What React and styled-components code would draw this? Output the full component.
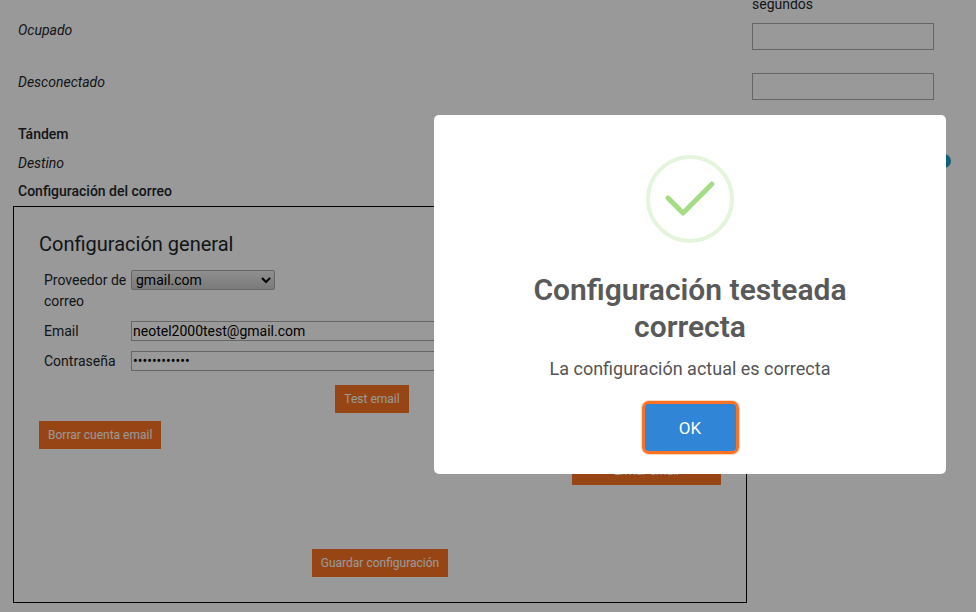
import React from 'react';
import styled, { createGlobalStyle } from 'styled-components';

const GlobalStyle = createGlobalStyle`
  html, body {
    margin: 0;
    height: 100%;
    overflow: hidden;
    background: #fff;
    font-family: Roboto, 'Liberation Sans', sans-serif;
    color: #212529;
  }
`;

const Page = styled.div`
  width: 976px;
  height: 612px;
  overflow: hidden;
`;

/* the page behind the dialog is scrolled a few pixels */
const Content = styled.div`
  margin-top: -4px;
  display: flex;
  flex-direction: column;
`;

const SettingRow = styled.div`
  display: flex;
  justify-content: space-between;
  align-items: flex-start;
  height: ${(p) => p.$height}px;
  padding-left: 18px;
`;

const StateLabel = styled.i`
  display: block;
  font-size: 14px;
  line-height: 20px;
  margin-top: ${(p) => p.$top || 0}px;
`;

const SectionLabel = styled.div`
  font-size: 14px;
  font-weight: 500;
  line-height: 20px;
  padding-left: 18px;
  height: ${(p) => p.$height}px;
`;

const RightColumn = styled.div`
  width: 224px;
  display: flex;
  flex-direction: column;
`;

const Hint = styled.span`
  font-size: 14px;
  line-height: 16px;
  height: 16px;
  margin-bottom: 11px;
`;

const TimeInput = styled.input`
  box-sizing: border-box;
  width: 182px;
  height: 27px;
  background: #fff;
  border: 1px solid #aaa;
  margin: 0;
  padding: 0;
`;

const ToggleDot = styled.span`
  width: 14px;
  height: 14px;
  margin: 1px 25px 0 0;
  border-radius: 50%;
  background: #1f9fcc;
`;

const MailBox = styled.div`
  box-sizing: border-box;
  width: 734px;
  height: 397px;
  margin-left: 13px;
  border: 1px solid #000;
  padding: 23px 25px 0;
  display: flex;
  flex-direction: column;
`;

const BoxTitle = styled.h2`
  margin: 0 0 12px;
  font-size: 20px;
  font-weight: 400;
  line-height: 28px;
`;

const FormGrid = styled.div`
  display: grid;
  grid-template-columns: 87px 574px;
  grid-auto-rows: auto;
  row-gap: 9px;
  padding-left: 5px;
`;

const FieldLabel = styled.label`
  font-size: 14px;
  line-height: 21px;
`;

const ProviderSelect = styled.select`
  box-sizing: border-box;
  width: 144px;
  height: 20px;
  margin: 0;
  padding: 0;
  border: 1px solid #aaa;
  border-radius: 2px;
  background: linear-gradient(#eee, #ccc);
  font-family: Roboto, 'Liberation Sans', sans-serif;
  font-size: 14px;
  color: #000;
`;

const TextField = styled.input`
  box-sizing: border-box;
  width: 100%;
  height: 20px;
  margin: 0;
  padding: 0 1px;
  border: 1px solid #aaa;
  background: #fff;
  font-family: Roboto, 'Liberation Sans', sans-serif;
  font-size: 14px;
  color: #000;
`;

const ButtonRow = styled.div`
  display: flex;
  justify-content: ${(p) => p.$justify || 'flex-start'};
  margin-top: ${(p) => p.$top}px;
  padding-right: ${(p) => p.$right || 0}px;
`;

const ActionButton = styled.button`
  height: 28px;
  padding: 0 9px;
  border: none;
  background: #fc7424;
  color: #fff;
  font-family: Roboto, 'Liberation Sans', sans-serif;
  font-size: 12px;
  width: ${(p) => p.$width}px;
`;

const Backdrop = styled.div`
  position: fixed;
  inset: 0;
  background: rgba(0, 0, 0, 0.4);
  display: flex;
  justify-content: flex-end;
  align-items: flex-start;
  padding: 115px 30px 0 0;
`;

const Dialog = styled.div`
  box-sizing: border-box;
  width: 512px;
  height: 359px;
  background: #fff;
  border-radius: 5px;
  padding-top: 40px;
  display: flex;
  flex-direction: column;
  align-items: center;
`;

const SuccessIcon = styled.svg`
  display: block;
  width: 88px;
  height: 88px;
`;

const DialogTitle = styled.h2`
  margin: 28px 0 0;
  width: 400px;
  font-size: 30px;
  font-weight: 600;
  line-height: 37px;
  text-align: center;
  color: #595959;
`;

const DialogText = styled.div`
  margin-top: 12px;
  font-size: 18px;
  line-height: 24px;
  color: #545454;
`;

const ConfirmButton = styled.button`
  box-sizing: border-box;
  margin-top: 20px;
  width: 97px;
  height: 53px;
  border: 3px solid #fb7322;
  border-radius: 7px;
  background: #3085d6;
  color: #fff;
  font-family: Roboto, 'Liberation Sans', sans-serif;
  font-size: 17px;
  box-shadow: 0 0 0 1px #fdd9c4;
`;

const App = () => (
  <>
    <GlobalStyle />
    <Page>
      <Content>
        <SettingRow $height={77}>
          <StateLabel $top={24}>Ocupado</StateLabel>
          <RightColumn>
            <Hint>segundos</Hint>
            <TimeInput />
          </RightColumn>
        </SettingRow>
        <SettingRow $height={51}>
          <StateLabel $top={-1}>Desconectado</StateLabel>
          <RightColumn>
            <TimeInput />
          </RightColumn>
        </SettingRow>
        <SectionLabel $height={29}>Tándem</SectionLabel>
        <SettingRow $height={28}>
          <StateLabel>Destino</StateLabel>
          <ToggleDot />
        </SettingRow>
        <SectionLabel $height={25}>Configuración del correo</SectionLabel>
        <MailBox>
          <BoxTitle>Configuración general</BoxTitle>
          <FormGrid>
            <FieldLabel>Proveedor de correo</FieldLabel>
            <div>
              <ProviderSelect defaultValue="gmail.com">
                <option>gmail.com</option>
              </ProviderSelect>
            </div>
            <FieldLabel>Email</FieldLabel>
            <TextField readOnly value="neotel2000test@gmail.com" />
            <FieldLabel>Contraseña</FieldLabel>
            <TextField readOnly type="password" value="neotel200012" />
          </FormGrid>
          <ButtonRow $justify="center" $top={13} $right={16}>
            <ActionButton>Test email</ActionButton>
          </ButtonRow>
          <ButtonRow $top={8}>
            <ActionButton>Borrar cuenta email</ActionButton>
          </ButtonRow>
          <ButtonRow $justify="flex-end" $top={8}>
            <ActionButton $width={149}>Enviar email</ActionButton>
          </ButtonRow>
          <ButtonRow $justify="center" $top={64}>
            <ActionButton>Guardar configuración</ActionButton>
          </ButtonRow>
        </MailBox>
      </Content>
      <Backdrop>
        <Dialog>
          <SuccessIcon viewBox="0 0 88 88">
            <circle cx="44" cy="44" r="42" fill="none" stroke="#e5f4dc" strokeWidth="4" />
            <path d="M22 43 L37 58 L66 29" fill="none" stroke="#a5dc86" strokeWidth="5" strokeLinecap="round" strokeLinejoin="round" />
          </SuccessIcon>
          <DialogTitle>Configuración testeada correcta</DialogTitle>
          <DialogText>La configuración actual es correcta</DialogText>
          <ConfirmButton>OK</ConfirmButton>
        </Dialog>
      </Backdrop>
    </Page>
  </>
);

export default App;
